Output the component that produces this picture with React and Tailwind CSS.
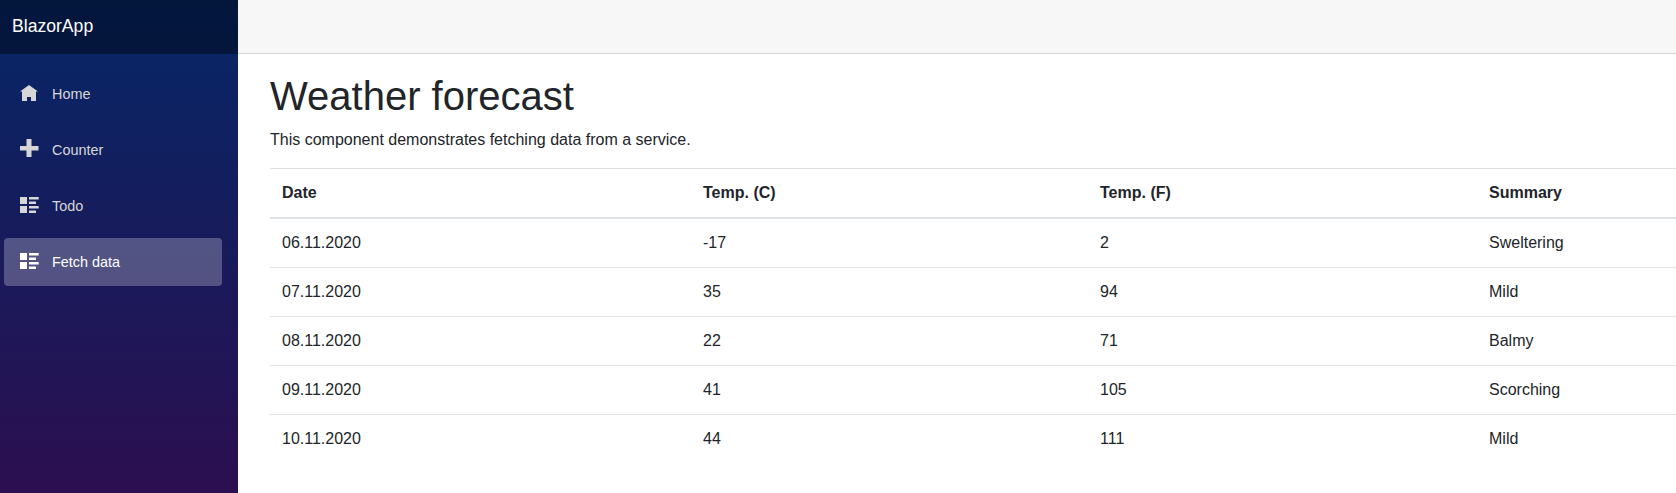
const navItems = [
  { label: "Home", icon: "home" },
  { label: "Counter", icon: "plus" },
  { label: "Todo", icon: "list" },
  { label: "Fetch data", icon: "list", active: true },
];

const forecasts = [
  ["06.11.2020", "-17", "2", "Sweltering"],
  ["07.11.2020", "35", "94", "Mild"],
  ["08.11.2020", "22", "71", "Balmy"],
  ["09.11.2020", "41", "105", "Scorching"],
  ["10.11.2020", "44", "111", "Mild"],
];

const columns = ["Date", "Temp. (C)", "Temp. (F)", "Summary"];

const iconPaths = {
  home: "M9 2L0 8.6h2V18h5v-4h4v4h5V8.6h2z",
  plus: "M6.5 0v7H0v4.6h6.5V18h5v-6.4h7V7h-7V0z",
  list: "M0 2h7v7H0zM9 2h9.7v2.6H9zM9 6.6h7v2.4H9zM0 11h7v7H0zM9 11h9.7v2.6H9zM9 15.6h7V18H9z",
};

function NavIcon({ name }) {
  return (
    <svg width="19" height="18" viewBox="0 0 19 18" fill="currentColor" className="mr-[13px] mb-1 shrink-0">
      <path d={iconPaths[name]} />
    </svg>
  );
}

function Sidebar() {
  return (
    <aside className="w-[238px] shrink-0 bg-[linear-gradient(180deg,#052767_0px,#3a0647_675px)]">
      <div className="flex h-[54px] items-center bg-black/40 pl-3 pb-0.5 text-[17.6px] text-white">BlazorApp</div>
      <nav className="flex flex-col gap-2 pt-4 pr-4 pl-1">
        {navItems.map((item) => (
          <a
            key={item.label}
            className={
              item.active
                ? "flex h-12 items-center rounded bg-white/25 pl-4 text-[14.4px] leading-6 text-white"
                : "flex h-12 items-center rounded pl-4 text-[14.4px] leading-6 text-[#d7d7d7]"
            }
          >
            <NavIcon name={item.icon} />
            {item.label}
          </a>
        ))}
      </nav>
    </aside>
  );
}

function ForecastTable() {
  return (
    <table className="w-[1420px] table-fixed border-separate border-spacing-0">
      <colgroup>
        <col className="w-[421px]" />
        <col className="w-[397px]" />
        <col className="w-[389px]" />
        <col />
      </colgroup>
      <thead>
        <tr>
          {columns.map((c) => (
            <th key={c} className="border-t border-b-2 border-[#dee2e6] p-3 text-left font-bold">
              {c}
            </th>
          ))}
        </tr>
      </thead>
      <tbody>
        {forecasts.map((row) => (
          <tr key={row[0]} className="group">
            {row.map((cell, i) => (
              <td key={i} className="border-t border-[#dee2e6] p-3 group-first:border-t-0">
                {cell}
              </td>
            ))}
          </tr>
        ))}
      </tbody>
    </table>
  );
}

export default function App() {
  return (
    <div className="flex h-[493px] overflow-hidden bg-white font-['Liberation_Sans',Arial,sans-serif] text-base text-[#212529]">
      <Sidebar />
      <main className="min-w-0 flex-1 overflow-hidden">
        <div className="h-[54px] border-b border-[#d6d5d5] bg-[#f7f7f7]" />
        <div className="pt-[18px] pl-8">
          <h1 className="mb-2 text-[40px] leading-12">Weather forecast</h1>
          <p className="mb-4">This component demonstrates fetching data from a service.</p>
          <ForecastTable />
        </div>
      </main>
    </div>
  );
}
